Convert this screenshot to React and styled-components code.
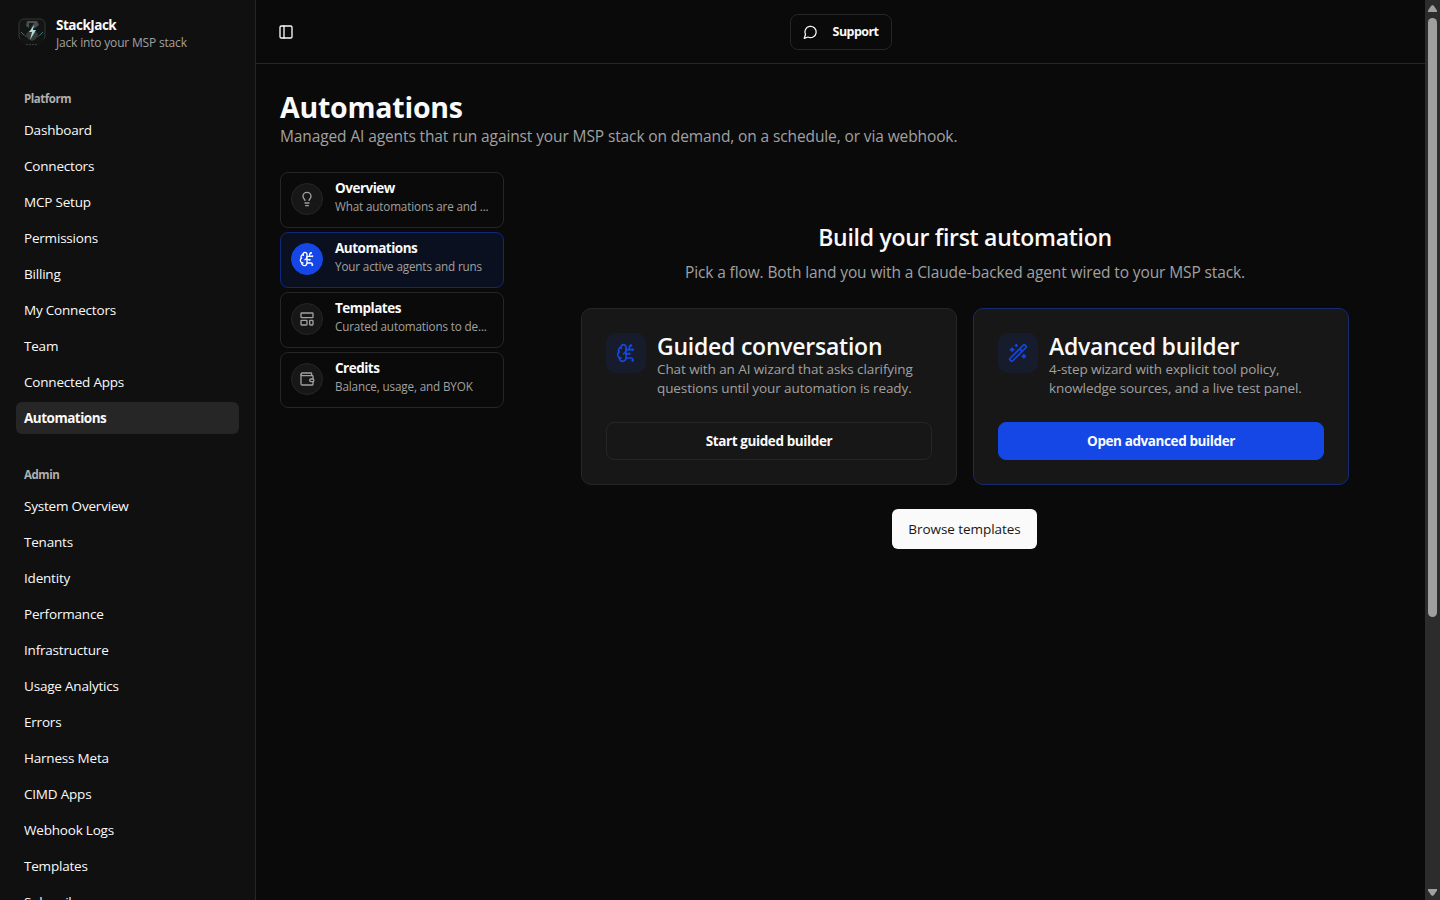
import React from "react";
import styled, { createGlobalStyle } from "styled-components";
import {
  BrainCircuit,
  LayoutTemplate,
  Lightbulb,
  PanelLeft,
  Wallet,
  WandSparkles,
} from "lucide-react";

const GlobalStyle = createGlobalStyle`
  * {
    box-sizing: border-box;
  }
  body {
    margin: 0;
    overflow: hidden;
    background: #0a0a0a;
    color: #fafafa;
    font-family: "Segoe UI", "Open Sans", "Noto Sans", sans-serif;
  }
  button {
    font-family: inherit;
    cursor: pointer;
  }
  h1, h2, h3, p {
    margin: 0;
  }
`;

const Page = styled.div`
  display: flex;
  height: 900px;
  overflow: hidden;
`;

const Sidebar = styled.aside`
  width: 256px;
  flex-shrink: 0;
  padding: 16px;
  overflow: hidden;
  background: #101010;
  border-right: 1px solid #262626;
`;

const Brand = styled.div`
  display: flex;
  gap: 8px;
  height: 34px;
  margin-bottom: 32px;
`;

const BrandName = styled.div`
  font-size: 13.5px;
  font-weight: 700;
  line-height: 18px;
  letter-spacing: -0.5px;
`;

const BrandTagline = styled.div`
  font-size: 12px;
  line-height: 18px;
  letter-spacing: -0.18px;
  color: #a1a1a1;
`;

const NavGroup = styled.nav`
  margin-bottom: 24px;
`;

const NavLabel = styled.div`
  height: 32px;
  padding: 0 8px;
  font-size: 11.5px;
  font-weight: 700;
  line-height: 33px;
  letter-spacing: -0.45px;
  color: #afafaf;
`;

const NavItem = styled.a`
  display: block;
  height: 32px;
  margin-bottom: 4px;
  padding: 0 8px;
  border-radius: 6px;
  font-size: 13.5px;
  font-weight: ${(props) => (props.$active ? 700 : 400)};
  line-height: 32px;
  letter-spacing: ${(props) => (props.$active ? "-0.5px" : "-0.2px")};
  background: ${(props) => (props.$active ? "#262626" : "transparent")};
`;

const Main = styled.main`
  flex: 1;
  min-width: 0;
`;

const Topbar = styled.header`
  display: flex;
  align-items: center;
  height: 64px;
  padding: 0 38px 0 22px;
  border-bottom: 1px solid #262626;
`;

const SupportButton = styled.button`
  display: flex;
  align-items: center;
  gap: 15px;
  width: 102px;
  height: 36px;
  margin: 0 auto;
  padding: 0 12px;
  border: 1px solid #262626;
  border-radius: 8px;
  background: #0a0a0a;
  color: #fafafa;
  font-size: 12.5px;
  font-weight: 700;
  line-height: 18px;
  letter-spacing: -0.55px;
`;

const Content = styled.div`
  padding: 27px 24px;
`;

const Title = styled.h1`
  font-size: 28.5px;
  font-weight: 700;
  line-height: 32px;
  letter-spacing: -0.22px;
`;

const Subtitle = styled.p`
  margin-top: 1px;
  font-size: 15.5px;
  line-height: 25px;
  letter-spacing: -0.115px;
  color: #a1a1a1;
`;

const Columns = styled.div`
  display: flex;
  margin-top: 23px;
`;

const Tabs = styled.div`
  display: flex;
  flex-direction: column;
  gap: 4px;
  width: 224px;
`;

const Tab = styled.button`
  display: flex;
  gap: 12px;
  height: 56px;
  padding: 7px 10px;
  border: 1px solid ${(props) => (props.$active ? "#11277a" : "#262626")};
  border-radius: 8px;
  background: ${(props) => (props.$active ? "#0b1020" : "transparent")};
  text-align: left;
`;

const TabIcon = styled.span`
  display: flex;
  align-items: center;
  justify-content: center;
  flex-shrink: 0;
  width: 32px;
  height: 32px;
  margin-top: 3px;
  border: 1px solid ${(props) => (props.$active ? "#1447e6" : "#262626")};
  border-radius: 50%;
  background: ${(props) => (props.$active ? "#1447e6" : "#171717")};
  color: ${(props) => (props.$active ? "#ffffff" : "#a1a1a1")};
`;

const TabText = styled.span`
  min-width: 0;
`;

const TabTitle = styled.span`
  display: block;
  color: #fafafa;
  font-size: 13.5px;
  font-weight: 700;
  line-height: 17px;
  letter-spacing: -0.5px;
`;

const TabHint = styled.span`
  display: block;
  color: #a1a1a1;
  font-size: 11.7px;
  line-height: 18px;
  letter-spacing: -0.15px;
  white-space: nowrap;
`;

const Panel = styled.section`
  display: flex;
  flex-direction: column;
  align-items: center;
  width: 768px;
  margin-left: 77px;
  padding-top: 48px;
`;

const PanelTitle = styled.h2`
  font-size: 23px;
  font-weight: 600;
  line-height: 34px;
  letter-spacing: -0.28px;
`;

const PanelText = styled.p`
  margin: 3px 0 21px;
  color: #a1a1a1;
  font-size: 15.5px;
  line-height: 30px;
  letter-spacing: -0.115px;
`;

const Cards = styled.div`
  display: grid;
  grid-template-columns: 1fr 1fr;
  gap: 16px;
  width: 100%;
`;

const Card = styled.article`
  height: 177px;
  padding: 24px;
  border: 1px solid ${(props) => (props.$primary ? "#162a70" : "#262626")};
  border-radius: 10px;
  background: #171717;
`;

const CardHead = styled.div`
  display: flex;
  gap: 11px;
  height: 89px;
`;

const CardIcon = styled.div`
  display: flex;
  align-items: center;
  justify-content: center;
  flex-shrink: 0;
  width: 40px;
  height: 40px;
  border-radius: 10px;
  background: #171c2c;
  color: #1447e6;
`;

const CardTitle = styled.h3`
  font-size: 23px;
  font-weight: 600;
  line-height: 27px;
  letter-spacing: -0.24px;
  white-space: nowrap;
`;

const CardText = styled.p`
  color: #a1a1a1;
  font-size: 13.5px;
  line-height: 19px;
  letter-spacing: -0.09px;
  white-space: nowrap;
`;

const CardButton = styled.button`
  width: 100%;
  height: 38px;
  border: 1px solid ${(props) => (props.$primary ? "#1447e6" : "#262626")};
  border-radius: 8px;
  background: ${(props) => (props.$primary ? "#1447e6" : "transparent")};
  color: #fafafa;
  font-size: 13.5px;
  font-weight: 700;
  letter-spacing: -0.4px;
`;

const BrowseButton = styled.button`
  width: 145px;
  height: 40px;
  margin: 24px 1px 0 0;
  padding: 0;
  border: none;
  border-radius: 6px;
  background: #fafafa;
  color: #171717;
  font-size: 13.5px;
  font-weight: 500;
  letter-spacing: -0.05px;
`;

const Scrollbar = styled.div`
  display: flex;
  flex-direction: column;
  align-items: center;
  width: 15px;
  flex-shrink: 0;
  padding: 5px 0 4px;
  background: #2c2c2c;
`;

const Thumb = styled.div`
  width: 9px;
  height: 599px;
  margin: 6px 0 auto;
  border-radius: 5px;
  background: #9f9f9f;
`;

const platformLinks = [
  "Dashboard",
  "Connectors",
  "MCP Setup",
  "Permissions",
  "Billing",
  "My Connectors",
  "Team",
  "Connected Apps",
  "Automations",
];

const adminLinks = [
  "System Overview",
  "Tenants",
  "Identity",
  "Performance",
  "Infrastructure",
  "Usage Analytics",
  "Errors",
  "Harness Meta",
  "CIMD Apps",
  "Webhook Logs",
  "Templates",
  "Subscribers",
];

const tabs = [
  { title: "Overview", hint: "What automations are and ...", icon: Lightbulb },
  { title: "Automations", hint: "Your active agents and runs", icon: BrainCircuit },
  { title: "Templates", hint: "Curated automations to de...", icon: LayoutTemplate },
  { title: "Credits", hint: "Balance, usage, and BYOK", icon: Wallet },
];

const Logo = () => (
  <svg width="32" height="32" viewBox="0 0 32 32" fill="none">
    <rect x="3" y="3" width="26" height="22" rx="5" fill="#141616" stroke="#333636" />
    <path d="M4 20h24l-1 7-4 3H9l-4-3z" fill="#121313" />
    <path d="M11 5h10l2 4-4 3h-6l-3-2z" fill="#4b4e4e" />
    <path d="M13 7h5l-3 5h-2z" fill="#191b1b" />
    <path d="M10 18l3-3h6l3 3-2 5-4 2-4-2z" fill="#363a3a" />
    <path d="M5 16l3 3M27 16l-3 3" stroke="#3b7479" />
    <path d="M8 19l3 2M24 19l-3 2" stroke="#47494a" />
    <path d="M18 9l-5 7h3l-2 8 6-10h-3z" fill="#a9dcda" />
    <path d="M10 28.500h12" stroke="#3b3d3d" strokeDasharray="2 1" />
  </svg>
);

const ChatIcon = () => (
  <svg
    width="16"
    height="16"
    viewBox="0 0 24 24"
    fill="none"
    stroke="currentColor"
    strokeWidth="2"
    strokeLinecap="round"
    strokeLinejoin="round"
  >
    <path d="M7.9 20A9 9 0 1 0 4 16.1L2 22Z" />
  </svg>
);

const Nav = ({ label, links, active }) => (
  <NavGroup>
    <NavLabel>{label}</NavLabel>
    {links.map((link) => (
      <NavItem key={link} $active={link === active}>
        {link}
      </NavItem>
    ))}
  </NavGroup>
);

const App = () => {
  return (
    <>
      <GlobalStyle />
      <Page>
        <Sidebar>
          <Brand>
            <Logo />
            <div>
              <BrandName>StackJack</BrandName>
              <BrandTagline>Jack into your MSP stack</BrandTagline>
            </div>
          </Brand>
          <Nav label="Platform" links={platformLinks} active="Automations" />
          <Nav label="Admin" links={adminLinks} />
        </Sidebar>
        <Main>
          <Topbar>
            <PanelLeft size={16} />
            <SupportButton>
              <ChatIcon />
              Support
            </SupportButton>
          </Topbar>
          <Content>
            <Title>Automations</Title>
            <Subtitle>
              Managed AI agents that run against your MSP stack on demand, on a
              schedule, or via webhook.
            </Subtitle>
            <Columns>
              <Tabs>
                {tabs.map(({ title, hint, icon: Icon }) => (
                  <Tab key={title} $active={title === "Automations"}>
                    <TabIcon $active={title === "Automations"}>
                      <Icon size={16} />
                    </TabIcon>
                    <TabText>
                      <TabTitle>{title}</TabTitle>
                      <TabHint>{hint}</TabHint>
                    </TabText>
                  </Tab>
                ))}
              </Tabs>
              <Panel>
                <PanelTitle>Build your first automation</PanelTitle>
                <PanelText>
                  Pick a flow. Both land you with a Claude-backed agent wired to
                  your MSP stack.
                </PanelText>
                <Cards>
                  <Card>
                    <CardHead>
                      <CardIcon>
                        <BrainCircuit size={20} />
                      </CardIcon>
                      <div>
                        <CardTitle>Guided conversation</CardTitle>
                        <CardText>
                          Chat with an AI wizard that asks clarifying
                          <br />
                          questions until your automation is ready.
                        </CardText>
                      </div>
                    </CardHead>
                    <CardButton>Start guided builder</CardButton>
                  </Card>
                  <Card $primary>
                    <CardHead>
                      <CardIcon>
                        <WandSparkles size={20} />
                      </CardIcon>
                      <div>
                        <CardTitle>Advanced builder</CardTitle>
                        <CardText>
                          4-step wizard with explicit tool policy,
                          <br />
                          knowledge sources, and a live test panel.
                        </CardText>
                      </div>
                    </CardHead>
                    <CardButton $primary>Open advanced builder</CardButton>
                  </Card>
                </Cards>
                <BrowseButton>Browse templates</BrowseButton>
              </Panel>
            </Columns>
          </Content>
        </Main>
        <Scrollbar>
          <svg width="9" height="7" viewBox="0 0 9 7">
            <path d="M4.500 0L6 1l3 4.500V7H0V5.500L3 1z" fill="#9f9f9f" />
          </svg>
          <Thumb />
          <svg width="9" height="7" viewBox="0 0 9 7">
            <path d="M4.500 7L6 6l3-4.500V0H0v1.500L3 6z" fill="#9f9f9f" />
          </svg>
        </Scrollbar>
      </Page>
    </>
  );
};

export default App;
